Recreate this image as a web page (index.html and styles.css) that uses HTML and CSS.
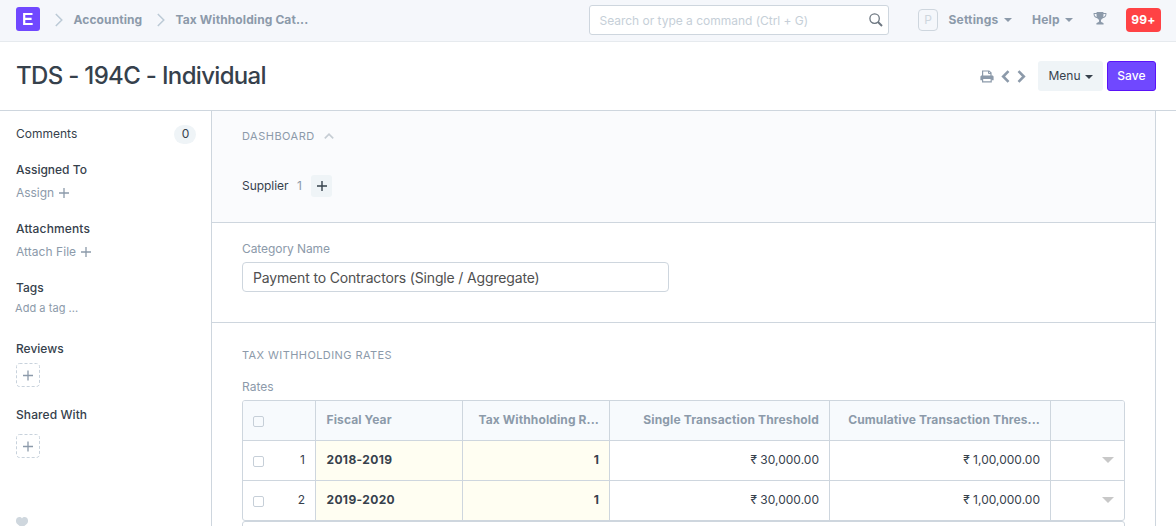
FILE: index.html
```html
<!DOCTYPE html>
<html lang="en">
<head>
<meta charset="utf-8">
<title>TDS - 194C - Individual</title>
<link rel="stylesheet" href="styles.css">
</head>
<body>
<header class="navbar">
  <div class="crumbs">
    <svg class="logo" width="24" height="24" viewBox="0 0 24 24"><rect width="24" height="24" rx="3" fill="#7048ff"/><path d="M16.500 7H8.200v10h8.500M8.200 11.900h7.400" fill="none" stroke="#fff" stroke-width="2.200"/></svg>
    <svg class="sep" width="8" height="14" viewBox="0 0 8 14"><path d="M.8 1l6 6-6 6" fill="none" stroke="#bccad6" stroke-width="1.500"/></svg>
    <a class="crumb crumb-module">Accounting</a>
    <svg class="sep sep-second" width="8" height="14" viewBox="0 0 8 14"><path d="M.8 1l6 6-6 6" fill="none" stroke="#bccad6" stroke-width="1.500"/></svg>
    <a class="crumb crumb-doctype">Tax Withholding Cat...</a>
  </div>
  <div class="search">
    <span class="search-text">Search or type a command (Ctrl + G)</span>
    <svg width="14" height="14" viewBox="0 0 14 14" fill="none" stroke="#6c7680"><circle cx="5.600" cy="5.600" r="4.700" stroke-width="1.300"/><path d="M9 9l4 4" stroke-width="1.900"/></svg>
  </div>
  <nav class="tools">
    <span class="avatar">P</span>
    <a class="tool settings">Settings<i class="caret"></i></a>
    <a class="tool help">Help<i class="caret"></i></a>
    <svg class="trophy" width="14" height="13" viewBox="0 0 14 13" fill="#8c9aaa"><path d="M3.600 0h6.800v1H13.400v1.600c0 2-1.500 3.300-3.700 3.600C9.200 7 8.500 7.500 8 7.800v1.400c0 .8.500 1 1.300 1.200.8.200 1.300.6 1.300 1.300v.8H3.400v-.8c0-.7.500-1.100 1.300-1.300C5.500 10.200 6 10 6 9.200V7.800C5.500 7.500 4.800 7 4.300 6.200 2.100 5.900.600 4.600.600 2.600V1h3zM1.600 2v.6c0 1.100.7 1.900 2.200 2.400-.2-.8-.3-1.900-.3-3zm8.900 0c0 1.100-.1 2.200-.3 3 1.500-.5 2.200-1.300 2.200-2.400V2z" fill-rule="evenodd"/></svg>
    <span class="alerts">99+</span>
  </nav>
</header>

<div class="page-head">
  <h1 class="title">TDS - 194C - Individual</h1>
  <div class="actions">
    <svg class="printer" width="14" height="13" viewBox="0 0 14 13"><path d="M2.600 6V1h6.400l2 1.800V6" fill="none" stroke="#8c9aaa" stroke-width="1.200"/><path d="M8.500 1v2.500H11" fill="none" stroke="#8c9aaa"/><path d="M1.800 5.500h10.400c.8 0 1.400.6 1.400 1.400V10.200H11.500V8.900H2.500v1.300H.400V6.900c0-.8.600-1.400 1.400-1.400z" fill="#8c9aaa"/><path d="M2.600 8.800v3.100h8.600V8.800" fill="none" stroke="#8c9aaa" stroke-width="1.200"/></svg>
    <svg class="prev" width="9" height="13" viewBox="0 0 9 13"><path d="M7.500 1.200L2.200 6.500l5.300 5.300" fill="none" stroke="#8c9aaa" stroke-width="2.600"/></svg>
    <svg class="next" width="9" height="13" viewBox="0 0 9 13"><path d="M1.500 1.200l5.300 5.300-5.300 5.300" fill="none" stroke="#8c9aaa" stroke-width="2.600"/></svg>
    <button class="btn btn-menu">Menu<i class="caret"></i></button>
    <button class="btn btn-save">Save</button>
  </div>
</div>

<div class="page-body">
  <aside class="sidebar">
    <div class="comments"><span>Comments</span><span class="count">0</span></div>
    <section class="side-group assigned">
      <h2 class="side-title">Assigned To</h2>
      <a class="side-link assign">Assign<svg class="plus" width="10" height="10" viewBox="0 0 10 10"><path d="M0 5h10M5 0v10" stroke="#8c9aaa" stroke-width="1.300"/></svg></a>
    </section>
    <section class="side-group attachments">
      <h2 class="side-title side-title-attach">Attachments</h2>
      <a class="side-link attach">Attach File<svg class="plus" width="10" height="10" viewBox="0 0 10 10"><path d="M0 5h10M5 0v10" stroke="#8c9aaa" stroke-width="1.300"/></svg></a>
    </section>
    <section class="side-group tags">
      <h2 class="side-title">Tags</h2>
      <a class="tag-link">Add a tag ...</a>
    </section>
    <section class="side-group reviews">
      <h2 class="side-title">Reviews</h2>
      <svg class="add-box" width="24" height="24" viewBox="0 0 24 24"><rect x=".5" y=".5" width="23" height="23" rx="3" fill="none" stroke="#c8d2dc" stroke-dasharray="3 2"/><path d="M7 12.500h10M12 7.500v10" stroke="#8c9aaa" stroke-width="1.300"/></svg>
    </section>
    <section class="side-group shared">
      <h2 class="side-title">Shared With</h2>
      <svg class="add-box" width="24" height="24" viewBox="0 0 24 24"><rect x=".5" y=".5" width="23" height="23" rx="3" fill="none" stroke="#c8d2dc" stroke-dasharray="3 2"/><path d="M7 12.500h10M12 7.500v10" stroke="#8c9aaa" stroke-width="1.300"/></svg>
    </section>
    <svg class="heart" width="12" height="11" viewBox="0 0 12 11"><path d="M6 11L1 6.800C-.6 5-.2 2 1.200.8 2.800-.3 5-.1 6 1.600 7-.1 9.200-.3 10.800.8c1.400 1.200 1.800 4.200.2 6z" fill="#cfd7de"/></svg>
  </aside>

  <main class="form">
    <section class="dashboard">
      <h3 class="section-head dash-head">DASHBOARD<svg width="10" height="6" viewBox="0 0 10 6"><path d="M.8 5.300L5 1.200l4.200 4.100" fill="none" stroke="#c6cdd4" stroke-width="1.700"/></svg></h3>
      <div class="links">
        <span class="link-name">Supplier</span>
        <span class="link-count">1</span>
        <button class="link-add"><svg width="10" height="10" viewBox="0 0 10 10"><path d="M0 5h10M5 0v10" stroke="#36414c" stroke-width="1.400"/></svg></button>
      </div>
    </section>
    <section class="category">
      <label class="label label-category">Category Name</label>
      <div class="input">Payment to Contractors (Single / Aggregate)</div>
    </section>
    <section class="rates">
      <h3 class="section-head rates-head">TAX WITHHOLDING RATES</h3>
      <label class="label label-rates">Rates</label>
      <div class="grid">
        <div class="row head">
          <div class="cell check"><i class="box"></i></div>
          <div class="cell h-year">Fiscal Year</div>
          <div class="cell num">Tax Withholding R...</div>
          <div class="cell num h-single">Single Transaction Threshold</div>
          <div class="cell num">Cumulative Transaction Thres...</div>
          <div class="cell"></div>
        </div>
        <div class="row">
          <div class="cell check"><i class="box"></i><span>1</span></div>
          <div class="cell required year">2018-2019</div>
          <div class="cell required num">1</div>
          <div class="cell num amount">₹ 30,000.00</div>
          <div class="cell num amount">₹ 1,00,000.00</div>
          <div class="cell open"><i class="open-caret"></i></div>
        </div>
        <div class="row">
          <div class="cell check"><i class="box"></i><span>2</span></div>
          <div class="cell required year">2019-2020</div>
          <div class="cell required num">1</div>
          <div class="cell num amount">₹ 30,000.00</div>
          <div class="cell num amount">₹ 1,00,000.00</div>
          <div class="cell open"><i class="open-caret"></i></div>
        </div>
      </div>
      <div class="grid-next"></div>
    </section>
  </main>
</div>
</body>
</html>
```
FILE: styles.css
```css
* { box-sizing: border-box; }
html, body { height: 526px; overflow: hidden; }
body {
  --line: #ced6de;
  --muted: #8c9aaa;
  --fill: #eff4f7;
  margin: 0;
  background: #fff;
  color: #36414c;
  font: 12px/18px Inter, sans-serif;
  display: flex;
  flex-direction: column;
}
h1, h2, h3 { margin: 0; }
svg { display: block; flex: none; }
span, a, label { white-space: nowrap; }
button { font: inherit; letter-spacing: inherit; color: inherit; padding: 0; }

.navbar {
  height: 42px;
  flex: none;
  background: #f5f7fb;
  border-bottom: 1px solid #e6eaee;
  display: flex;
  align-items: center;
  padding: 0 15px 1px 16px;
}
.crumbs { width: 573px; display: flex; align-items: center; }
.logo { margin-top: -2px; }
.sep { margin-left: 15px; }
.sep-second { margin-left: 14.5px; }
.crumb { color: var(--muted); font-weight: 700; margin-left: 10.5px; letter-spacing: 0.1px; }
.crumb-module { width: 69px; letter-spacing: 0.1px; }
.search {
  width: 300px;
  height: 30px;
  border: 1px solid var(--line);
  border-radius: 3px;
  background: #fff;
  display: flex;
  align-items: center;
  justify-content: space-between;
  padding: 0 5px 0 9.5px;
}
.search-text { color: #c6cfd8; letter-spacing: -0.02px; padding-top: 1px; }
.tools { flex: 1; display: flex; align-items: center; padding-left: 29px; margin-top: -1px; }
.avatar {
  width: 20px;
  height: 22px;
  border: 1px solid var(--line);
  border-radius: 4px;
  color: var(--line);
  line-height: 20px;
  text-align: center;
}
.tool { color: var(--muted); font-weight: 700; display: flex; align-items: center; letter-spacing: 0.2px; }
.settings { margin-left: 10.5px; width: 83.5px; }
.help { width: 61px; }
.caret {
  border: 4px solid transparent;
  border-top-color: currentColor;
  border-bottom: 0;
  margin-left: 5px;
  margin-top: 1px;
}
.trophy { margin-top: -3px; }
.alerts {
  width: 35px;
  height: 24px;
  margin-left: auto;
  border-radius: 4px;
  background: #ff4245;
  color: #fff;
  font-weight: 700;
  line-height: 24px;
  text-align: center;
  letter-spacing: 0.3px;
}

.page-head {
  height: 69px;
  flex: none;
  border-bottom: 1px solid var(--line);
  display: flex;
  align-items: center;
  justify-content: space-between;
  padding: 0 20px 0 16px;
}
.title { font-size: 24px; line-height: 30px; font-weight: 500; letter-spacing: -0.67px; }
.actions { display: flex; align-items: center; }
.printer { margin-right: 7px; }
.prev { margin-right: 7px; }
.next { margin-right: 12px; }
.btn { height: 30px; border: 0; border-radius: 3px; display: flex; align-items: center; justify-content: center; }
.btn-menu { width: 65px; background: var(--fill); margin-right: 4px; }
.btn-menu .caret { margin-left: 4px; }
.btn-save { width: 49px; background: #7048ff; border: 1px solid #5a12f8; color: #fff; font-weight: 500; letter-spacing: 0.1px; }

.page-body { flex: 1; min-height: 0; display: flex; }
.sidebar { width: 211px; padding: 14px 15px 0 16px; flex: none; }
.comments { height: 19px; display: flex; justify-content: space-between; align-items: flex-start; line-height: 18px; }
.count { width: 22px; height: 19px; border-radius: 10px; background: var(--fill); text-align: center; padding-left: 1px; }
.side-title { font-size: 12px; line-height: 18px; font-weight: 500; letter-spacing: 0; }
.side-title-attach { letter-spacing: 0.15px; }
.side-group { height: 59px; }
.assigned { margin-top: 17px; }
.side-link { color: var(--muted); display: flex; align-items: center; margin-top: 5px; }
.assign { letter-spacing: -0.05px; }
.plus { margin-left: 5px; }
.attach { letter-spacing: 0.05px; }
.tags { height: 61px; }
.tag-link { color: var(--muted); font-size: 11px; display: block; margin: 2px 0 0 -1px; letter-spacing: 0.05px; }
.add-box { margin-top: 5px; }
.reviews { height: 66px; }
.shared { height: 111px; }
.shared .side-title { letter-spacing: 0.08px; }
.shared .add-box { margin-top: 10px; }

.form { width: 945px; border: solid var(--line); border-width: 0 1px; }
.section-head { color: var(--muted); font-size: 11px; line-height: 18px; font-weight: 400; letter-spacing: 0.5px; }
.rates-head { letter-spacing: 0.42px; }
.dashboard { height: 112px; background: #fafbfd; border-bottom: 1px solid var(--line); padding: 16px 30px 0; }
.dash-head { display: flex; align-items: center; gap: 9px; }
.links { display: flex; align-items: center; margin-top: 30px; height: 22px; }
.link-name { width: 55px; letter-spacing: -0.05px; }
.link-count { color: var(--muted); width: 14px; }
.link-add { width: 21px; height: 22px; border: 0; border-radius: 3px; background: var(--fill); display: flex; align-items: center; justify-content: center; }
.category { height: 100px; border-bottom: 1px solid var(--line); padding: 17px 30px 0; }
.label { color: var(--muted); display: block; }
.label-category { letter-spacing: -0.08px; }
.input {
  width: 427px;
  height: 30px;
  margin-top: 4px;
  border: 1px solid var(--line);
  border-radius: 4px;
  padding: 0 10px;
  font-size: 14px;
  line-height: 29px;
  letter-spacing: -0.16px;
  color: #505050;
}
.rates { padding: 23px 30px 0; }
.label-rates { margin-top: 14px; }
.grid { width: 883px; margin-top: 4px; border: 1px solid var(--line); border-radius: 3px; overflow: hidden; }
.row { display: grid; grid-template-columns: 73px 147px 147px 220px 221px 73px; height: 40px; border-bottom: 1px solid var(--line); }
.row:last-child { height: 39px; border-bottom: 0; }
.cell { border-right: 1px solid var(--line); padding: 0 10px 2px; display: flex; align-items: center; white-space: nowrap; }
.row:last-child .cell { padding-bottom: 1px; }
.cell:last-child { border-right: 0; }
.head { background: #f7fafd; color: var(--muted); font-weight: 700; letter-spacing: 0.12px; }
.head .h-single { letter-spacing: 0.15px; }
.head .h-year { padding-left: 10.5px; }
.num { justify-content: flex-end; }
.check { justify-content: space-between; padding-right: 10px; }
.box { width: 11px; height: 11px; border: 1px solid #c6cfd8; border-radius: 2px; margin-top: 3px; }
.required { background: #fffef2; font-weight: 700; }
.year { letter-spacing: 0.36px; padding-left: 10.5px; }
.amount { letter-spacing: 0.02px; }
.open { justify-content: flex-end; }
.open-caret { border: 6px solid transparent; border-top-color: #c8c8c8; border-bottom: 0; }
.grid-next { width: 883px; height: 20px; border: 1px solid var(--line); border-radius: 3px; }
```
